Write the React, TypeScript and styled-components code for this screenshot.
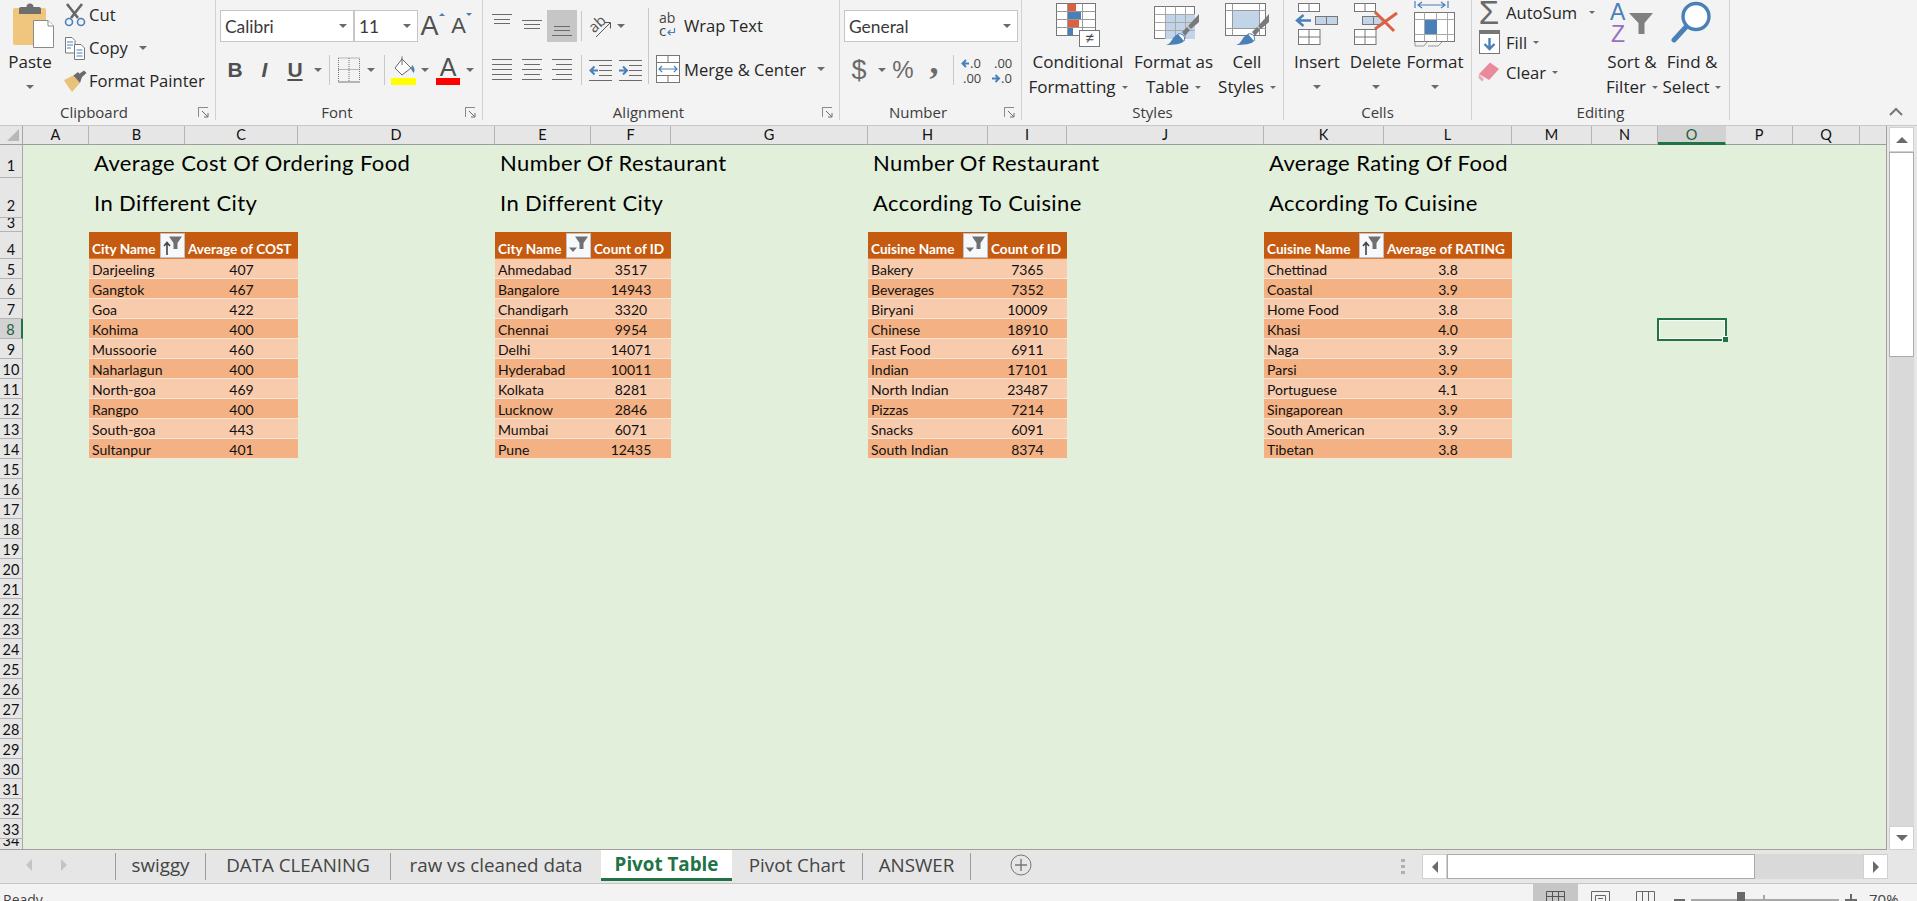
import React from "react";
import styled, { createGlobalStyle } from "styled-components";

const GlobalStyle = createGlobalStyle`
  html, body { margin: 0; padding: 0; overflow: hidden; background: #f3f3f3; }
  #root { width: 1917px; height: 901px; overflow: hidden; }
  * { box-sizing: border-box; }
`;

const UI = `"Open Sans", "Noto Sans", sans-serif`;
const CELL = `Lato, "Open Sans", sans-serif`;
const GREEN = "#217346";
const GRAY = "#6a6a6a";
const BLUE = "#4a80b8";
const RED = "#dc6141";

const Page = styled.div`
  width: 1917px;
  height: 901px;
  display: flex;
  flex-direction: column;
  overflow: hidden;
  font-family: ${UI};
  color: #262626;
`;

/* ribbon */
const Ribbon = styled.div`
  height: 126px;
  flex: none;
  display: flex;
  background: #f3f3f3;
  border-bottom: 1px solid #c8c8c8;
  overflow: hidden;
`;

const Group = styled.div<{ $w: number }>`
  width: ${(p) => p.$w}px;
  flex: none;
  height: 120px;
  display: flex;
  flex-direction: column;
  border-right: 1px solid #d2d2d2;
`;

const GroupBody = styled.div<{ $pl?: number }>`
  height: 104px;
  flex: none;
  display: flex;
  padding-left: ${(p) => p.$pl ?? 0}px;
`;

const LabelRow = styled.div`
  height: 17px;
  flex: none;
  display: flex;
  align-items: center;
`;

const GroupLabel = styled.div<{ $pr?: number }>`
  flex: 1;
  text-align: center;
  font-size: 15px;
  line-height: 17px;
  padding-right: ${(p) => p.$pr ?? 0}px;
  color: #3c3c3c;
`;

const Launcher = styled.svg`
  width: 11px;
  height: 11px;
  flex: none;
  margin-right: 6px;
`;

const CollapseArea = styled.div`
  flex: 1;
  display: flex;
  justify-content: flex-end;
  align-items: flex-start;
  padding: 107px 14px 0 0;
`;

const LargeBtn = styled.div<{ $w: number }>`
  width: ${(p) => p.$w}px;
  flex: none;
  display: flex;
  flex-direction: column;
  align-items: center;
  font-size: 17px;
  line-height: 24px;
  white-space: nowrap;
`;

const LargeIcon = styled.div<{ $shift?: number }>`
  height: 50px;
  flex: none;
  display: flex;
  align-items: flex-start;
  justify-content: center;
  margin-left: ${(p) => p.$shift ?? 0}px;
`;

const CaretLine = styled.div`
  height: 24px;
  margin-top: 1px;
  display: flex;
  align-items: center;
  gap: 6px;
`;

const Caret = styled.span<{ $small?: boolean }>`
  display: inline-block;
  flex: none;
  width: 0;
  height: 0;
  border-left: ${(p) => (p.$small ? 3 : 4)}px solid transparent;
  border-right: ${(p) => (p.$small ? 3 : 4)}px solid transparent;
  border-top: ${(p) => (p.$small ? 3 : 4)}px solid ${GRAY};
`;

const SmallStack = styled.div<{ $w?: number; $top: number; $h: number }>`
  width: ${(p) => (p.$w ? `${p.$w}px` : "auto")};
  flex: none;
  margin-top: ${(p) => p.$top}px;
  display: grid;
  grid-auto-rows: ${(p) => p.$h}px;
`;

const SmallRow = styled.div`
  display: flex;
  align-items: center;
  font-size: 16.6px;
  white-space: nowrap;
`;

const IconBox = styled.div<{ $w: number }>`
  width: ${(p) => p.$w}px;
  flex: none;
  display: flex;
  align-items: center;
  justify-content: center;
`;

const CaretGap = styled.span<{ $gap: number }>`
  margin-left: ${(p) => p.$gap}px;
  display: inline-flex;
`;

const ToolColumn = styled.div`
  flex: none;
  display: flex;
  flex-direction: column;
`;

const ToolRow = styled.div<{ $top: number }>`
  height: 32px;
  flex: none;
  margin-top: ${(p) => p.$top}px;
  display: flex;
  align-items: center;
`;

const Slot = styled.div<{ $w: number; $active?: boolean }>`
  width: ${(p) => p.$w}px;
  height: 32px;
  flex: none;
  display: flex;
  align-items: center;
  justify-content: center;
  background: ${(p) => (p.$active ? "#c6c6c6" : "transparent")};
  color: #505050;
`;

const VSep = styled.div`
  width: 1px;
  height: 30px;
  background: #c8c8c8;
`;

const TallSep = styled(VSep)`
  height: 76px;
  margin: 8px 3px 0 3px;
  flex: none;
`;

const Combo = styled.div<{ $w: number }>`
  width: ${(p) => p.$w}px;
  height: 32px;
  flex: none;
  background: #fff;
  border: 1px solid #c6c6c6;
  display: flex;
  align-items: center;
  justify-content: space-between;
  padding: 0 6px 0 4px;
  font-family: ${CELL};
  font-size: 17.4px;
  color: #3a3a3a;
`;

const BoldLetter = styled.span`
  font-family: "Liberation Sans", sans-serif;
  font-weight: 700;
  font-size: 21px;
  color: #505050;
`;

const ItalicLetter = styled(BoldLetter)`
  font-style: italic;
`;

const UnderLetter = styled(BoldLetter)`
  text-decoration: underline;
  text-underline-offset: 2px;
`;

const GrowLetter = styled.span<{ $size: number }>`
  font-family: "Liberation Sans", sans-serif;
  font-size: ${(p) => p.$size}px;
  color: #505050;
  line-height: 1;
`;

const TopTri = styled.span`
  align-self: flex-start;
  margin-top: 3px;
  display: inline-flex;
`;

const ColorLetter = styled.div`
  display: flex;
  flex-direction: column;
  align-items: center;
  font-family: "Liberation Sans", sans-serif;
  font-size: 25px;
  line-height: 22px;
  color: #505050;
`;

const ColorBar = styled.div<{ $c: string }>`
  width: 24px;
  height: 7px;
  background: ${(p) => p.$c};
`;

const NumSign = styled.span<{ $size: number }>`
  font-size: ${(p) => p.$size}px;
  font-family: "Liberation Sans", sans-serif;
  color: ${GRAY};
  line-height: 1;
`;

const CommaSign = styled(NumSign)`
  font-family: "Liberation Serif", serif;
  font-weight: 700;
  transform: translateY(-9px);
`;

/* sheet */
const Main = styled.div`
  height: 724px;
  flex: none;
  display: flex;
  background: #e6e6e6;
`;

const colWidths = [23, 66, 96, 113, 197, 96, 80, 197, 120, 79, 197, 120, 128, 80, 66, 68, 67, 67, 27];
const colNames = ["A", "B", "C", "D", "E", "F", "G", "H", "I", "J", "K", "L", "M", "N", "O", "P", "Q", ""];

const SheetGrid = styled.div`
  width: 1887px;
  flex: none;
  height: 724px;
  display: grid;
  grid-template-columns: ${colWidths.map((w) => `${w}px`).join(" ")};
  grid-template-rows: 19px 33px 40px 14px 27px repeat(29, 20px) 11px;
  background: #e2efda;
  border-bottom: 1px solid #a0a0a0;
  border-right: 1px solid #a0a0a0;
  overflow: hidden;
  font-family: ${CELL};
`;

const Corner = styled.div`
  background: #e6e6e6;
  border-right: 1px solid #a8a8a8;
  border-bottom: 1px solid #9c9c9c;
  display: flex;
  align-items: flex-end;
  justify-content: flex-end;
  padding: 0 3px 3px 0;
`;

const CornerMark = styled.div`
  width: 12px;
  height: 12px;
  background: #b8b8b8;
  clip-path: polygon(100% 0, 100% 100%, 0 100%);
`;

const ColHead = styled.div<{ $sel?: boolean }>`
  background: ${(p) => (p.$sel ? "#d2d2d2" : "#e6e6e6")};
  border-right: 1px solid ${(p) => (p.$sel ? "#d2d2d2" : "#b4b4b4")};
  border-bottom: ${(p) => (p.$sel ? `3px solid ${GREEN}` : "1px solid #9c9c9c")};
  text-align: center;
  font-size: 14.5px;
  line-height: 18px;
  color: ${(p) => (p.$sel ? "#1d5f3b" : "#111")};
`;

const ColFill = styled.div`
  background: #e6e6e6;
  border-bottom: 1px solid #9c9c9c;
`;

const RowHead = styled.div<{ $sel?: boolean; $tall?: boolean }>`
  grid-column: 1;
  background: ${(p) => (p.$sel ? "#d2d2d2" : "#e6e6e6")};
  border-right: ${(p) => (p.$sel ? `2px solid ${GREEN}` : "1px solid #a8a8a8")};
  border-bottom: 1px solid #b4b4b4;
  display: flex;
  align-items: flex-end;
  justify-content: center;
  padding-bottom: ${(p) => (p.$tall ? 3 : 0)}px;
  font-size: 14.5px;
  line-height: 17px;
  overflow: hidden;
  color: ${(p) => (p.$sel ? "#1d5f3b" : "#111")};
`;

const Title = styled.div<{ $col: number; $row: number; $pl: number }>`
  grid-column: ${(p) => p.$col};
  grid-row: ${(p) => p.$row};
  align-self: end;
  height: 30px;
  line-height: 30px;
  padding-left: ${(p) => p.$pl}px;
  white-space: nowrap;
  font-size: 22px;
  letter-spacing: 0.4px;
  color: #000;
`;

const PivotTable = styled.div<{ $col: number; $a: number; $b: number }>`
  grid-column: ${(p) => p.$col} / span 2;
  grid-row: 5 / span 11;
  display: grid;
  grid-template-columns: ${(p) => p.$a}px ${(p) => p.$b}px;
  grid-template-rows: 27px repeat(10, 20px);
  font-size: 14px;
`;

const HeadCell = styled.div`
  background: #c55a11;
  color: #fff;
  font-weight: 700;
  font-size: 13.6px;
  white-space: nowrap;
  display: flex;
  justify-content: space-between;
  align-items: flex-end;
  padding-left: 3px;
  line-height: 18px;
  border-bottom: 1px solid #ec7c30;
`;

const FilterBtn = styled.div`
  width: 25px;
  height: 25px;
  flex: none;
  background: #f7f8fa;
  border: 1px solid #bfc3c9;
  display: flex;
`;

const DataCell = styled.div<{ $odd: boolean; $center?: boolean }>`
  background: ${(p) => (p.$odd ? "#f4b183" : "#f8cbad")};
  border-bottom: 1px solid #fbe5d6;
  padding-left: ${(p) => (p.$center ? 0 : 3)}px;
  padding-top: 1px;
  text-align: ${(p) => (p.$center ? "center" : "left")};
  line-height: 19px;
  color: #111;
  white-space: nowrap;
`;

const Selection = styled.div`
  grid-column: 16;
  grid-row: 9;
  margin: -1px -1px -2px -1px;
  border: 2px solid ${GREEN};
  outline: 1px solid #fff;
  outline-offset: -3px;
  position: relative;
  z-index: 2;
`;

const FillHandle = styled.div`
  position: absolute;
  right: -3px;
  bottom: -3px;
  width: 6px;
  height: 6px;
  background: ${GREEN};
  border-left: 1px solid #fff;
  border-top: 1px solid #fff;
`;

const VScroll = styled.div`
  width: 30px;
  flex: none;
  display: flex;
  flex-direction: column;
  padding: 1px 3px 0 2px;
  background: #e6e6e6;
`;

const ScrollBtn = styled.div<{ $w?: number; $h?: number }>`
  width: ${(p) => (p.$w ? `${p.$w}px` : "100%")};
  height: ${(p) => (p.$h ? `${p.$h}px` : "100%")};
  flex: none;
  background: #fff;
  border: 1px solid #d0d0d0;
  display: flex;
  align-items: center;
  justify-content: center;
`;

const VThumb = styled.div`
  height: 205px;
  flex: none;
  background: #fff;
  border: 1px solid #ababab;
`;

const VTrack = styled.div`
  flex: 1;
  background: #d9d9d9;
`;

const Tri = styled.span<{ $dir: "up" | "down" | "left" | "right"; $c?: string; $s?: number }>`
  display: inline-block;
  width: 0;
  height: 0;
  ${(p) => {
    const s = p.$s ?? 6;
    const c = p.$c ?? GRAY;
    if (p.$dir === "up") return `border-left:${s}px solid transparent;border-right:${s}px solid transparent;border-bottom:${s}px solid ${c};`;
    if (p.$dir === "down") return `border-left:${s}px solid transparent;border-right:${s}px solid transparent;border-top:${s}px solid ${c};`;
    if (p.$dir === "left") return `border-top:${s}px solid transparent;border-bottom:${s}px solid transparent;border-right:${s}px solid ${c};`;
    return `border-top:${s}px solid transparent;border-bottom:${s}px solid transparent;border-left:${s}px solid ${c};`;
  }}
`;

/* tab strip */
const TabBar = styled.div`
  height: 34px;
  flex: none;
  display: flex;
  align-items: flex-start;
  background: #e6e6e6;
  border-bottom: 1px solid #c6c6c6;
`;

const TabNav = styled.div`
  width: 115px;
  height: 30px;
  flex: none;
  display: flex;
  align-items: center;
  padding-left: 26px;
  gap: 29px;
`;

const Tab = styled.div<{ $w: number; $active?: boolean; $sep?: boolean; $end?: boolean }>`
  width: ${(p) => p.$w}px;
  flex: none;
  height: ${(p) => (p.$active ? 31 : 27)}px;
  margin-top: ${(p) => (p.$active ? 0 : 3)}px;
  padding-bottom: ${(p) => (p.$active ? 0 : 3)}px;
  display: flex;
  align-items: ${(p) => (p.$active ? "flex-start" : "center")};
  justify-content: center;
  font-size: 18.8px;
  line-height: ${(p) => (p.$active ? 29 : 24)}px;
  white-space: nowrap;
  color: ${(p) => (p.$active ? GREEN : "#444")};
  font-weight: ${(p) => (p.$active ? 700 : 400)};
  background: ${(p) => (p.$active ? "#fff" : "transparent")};
  border-left: ${(p) => (p.$sep ? "1px solid #9c9c9c" : "none")};
  border-right: ${(p) => (p.$end ? "1px solid #9c9c9c" : "none")};
  border-bottom: ${(p) => (p.$active ? `3px solid ${GREEN}` : "none")};
`;

const PlusBtn = styled.svg`
  width: 22px;
  height: 22px;
  flex: none;
  margin: 4px 0 0 39px;
`;

const Dots = styled.div`
  margin: 9px 17px 0 auto;
  width: 4px;
  height: 15px;
  flex: none;
  display: flex;
  flex-direction: column;
  justify-content: space-between;
`;

const Dot = styled.span`
  width: 4px;
  height: 3px;
  background: #b0b0b0;
`;

const HScroll = styled.div`
  width: 466px;
  height: 25px;
  flex: none;
  margin: 4px 29px 0 0;
  display: flex;
  background: #d9d9d9;
`;

const HThumb = styled.div`
  width: 308px;
  flex: none;
  background: #fff;
  border: 1px solid #ababab;
`;

const HSpacer = styled.div`
  flex: 1;
`;

/* status bar */
const StatusBar = styled.div`
  height: 17px;
  flex: none;
  display: flex;
  background: #f3f3f3;
  overflow: hidden;
`;

const Ready = styled.div`
  padding: 6px 0 0 3px;
  font-size: 14px;
  line-height: 19px;
  color: #444;
  margin-right: auto;
`;

const ViewBtn = styled.div<{ $active?: boolean }>`
  width: 45px;
  flex: none;
  background: ${(p) => (p.$active ? "#c6c6c6" : "transparent")};
  display: flex;
  justify-content: center;
  padding-top: 7px;
`;

const ZoomArea = styled.div`
  width: 249px;
  flex: none;
  display: flex;
  align-items: flex-start;
  padding-left: 6px;
  font-size: 15px;
  color: #444;
`;

const ZoomMinus = styled.div`
  width: 11px;
  height: 2px;
  background: ${GRAY};
  margin: 15px 6px 0 0;
  flex: none;
`;

const ZoomTrack = styled.div`
  width: 148px;
  height: 2px;
  flex: none;
  margin-top: 15px;
  background: #a8a8a8;
  position: relative;
`;

const ZoomKnob = styled.div`
  position: absolute;
  left: 46px;
  top: -7px;
  width: 8px;
  height: 10px;
  background: ${GRAY};
`;

const ZoomTick = styled.div`
  position: absolute;
  left: 72px;
  top: -4px;
  width: 2px;
  height: 4px;
  background: #a8a8a8;
`;

const ZoomPlus = styled.svg`
  width: 12px;
  height: 12px;
  flex: none;
  margin: 10px 12px 0 6px;
`;

const ZoomValue = styled.div`
  line-height: 19px;
  padding-top: 6px;
`;

/* drawings */
const Stroke = ({ d, c = GRAY, w = 1 }: { d: string; c?: string; w?: number }) => (
  <path d={d} fill="none" stroke={c} strokeWidth={w} />
);

const DialogLauncher = () => (
  <Launcher viewBox="0 0 11 11">
    <Stroke d="M0.5 5V0.5H10" c="#8a8a8a" />
    <Stroke d="M0.5 0.5V10" c="#8a8a8a" />
    <Stroke d="M4 4L9.5 9.5M6 10H10V6" c="#6a6a6a" />
  </Launcher>
);

const PasteIcon = () => (
  <svg width="60" height="50" viewBox="0 0 60 50">
    <rect x="13" y="8" width="33" height="37" rx="2" fill="#f0c67f" />
    <path d="M19 14V9a2 2 0 0 1 2-2h5.5a3.5 3.5 0 0 1 7 0H39a2 2 0 0 1 2 2v5z" fill="#6e6e6e" />
    <path d="M33.5 20.5H48L53.5 26V47.5H33.5Z" fill="#fff" stroke="#8a8a8a" />
    <path d="M48 20.5V26H53.5" fill="#fff" stroke="#8a8a8a" />
  </svg>
);

const CutIcon = () => (
  <svg width="22" height="24" viewBox="0 0 22 24">
    <Stroke d="M3 1L14 15M18 1L7 15" w={2.6} c="#666" />
    <circle cx="5" cy="19" r="3.5" fill="none" stroke={BLUE} strokeWidth="1.6" />
    <circle cx="17" cy="19" r="3.5" fill="none" stroke={BLUE} strokeWidth="1.6" />
  </svg>
);

const CopyIcon = () => (
  <svg width="22" height="24" viewBox="0 0 22 24">
    <path d="M1.5 1.5H8L11 4.5V17H1.5Z" fill="#fff" stroke="#777" />
    <path d="M3 6H9M3 9H9M3 12H7" stroke={BLUE} />
    <path d="M10.5 8.5H17L20.5 12V23.5H10.5Z" fill="#fff" stroke="#777" />
    <path d="M12.5 14H18.5M12.5 17H18.5M12.5 20H18.5" stroke={BLUE} />
  </svg>
);

const BrushIcon = () => (
  <svg width="24" height="22" viewBox="0 0 24 22">
    <path d="M1 10L11 5L17 13L9 22C7 19 3 14 1 10Z" fill="#e8c27a" />
    <path d="M10.5 5.5L15 2L19 7L17 13Z" fill="#6a6a6a" />
    <path d="M16 4L21 0.5L23.5 3L18.5 7.5Z" fill="#6a6a6a" />
  </svg>
);

const BorderIcon = () => (
  <svg width="22" height="26" viewBox="0 0 22 26">
    <path d="M0.5 1H21.5V24M0.5 1V24M11 1V24M0.5 12.5H21.5" fill="none" stroke="#777" strokeDasharray="1 1" />
    <path d="M0 25H22" stroke="#777" />
  </svg>
);

const FillIcon = () => (
  <svg width="25" height="29" viewBox="0 0 25 29">
    <path d="M11 3L20 12L11 19L4 12Z" fill="#fff" stroke="#666" />
    <path d="M11 0.5V9" stroke="#666" />
    <path d="M21 9C24 12 24 15 22.5 17L20 13Z" fill={BLUE} />
    <rect x="0" y="22" width="25" height="7" fill="#ffff00" />
  </svg>
);

const HLines = ({ lines, w = 20, h = 32, c = GRAY }: { lines: [number, number, number][]; w?: number; h?: number; c?: string }) => (
  <svg width={w} height={h} viewBox={`0 0 ${w} ${h}`}>
    {lines.map(([a, b, y], i) => (
      <path key={i} d={`M${a} ${y + 0.5}H${b}`} stroke={c} />
    ))}
  </svg>
);

const OrientIcon = () => (
  <svg width="24" height="26" viewBox="0 0 24 26">
    <text x="1" y="16" fontSize="15" fontFamily="'Open Sans', sans-serif" fill="#555" transform="rotate(-42 9 13)">ab</text>
    <path d="M7 24L21 10M15.5 9.5H21.5V15.5" fill="none" stroke="#555" />
  </svg>
);

const IndentIcon = ({ dir }: { dir: "out" | "in" }) => (
  <svg width="23" height="32" viewBox="0 0 23 32">
    <path d="M0 6.5H23M10 11.5H23M10 16.5H23M10 21.5H23M0 26.5H23" stroke={GRAY} />
    {dir === "out" ? (
      <path d="M9 16.5H3M5.5 12.5L1.5 16.5L5.5 20.5" fill="none" stroke={BLUE} strokeWidth="2" />
    ) : (
      <path d="M0 16.5H7M4 12.5L8 16.5L4 20.5" fill="none" stroke={BLUE} strokeWidth="2" />
    )}
  </svg>
);

const WrapIcon = () => (
  <svg width="18" height="26" viewBox="0 0 18 26">
    <text x="0" y="11" fontSize="14" fontFamily="'Open Sans', sans-serif" fill="#444">ab</text>
    <text x="0" y="24" fontSize="15" fontFamily="'Open Sans', sans-serif" fill="#444">c</text>
    <path d="M15.5 16V20.5H9M11.5 18L9 20.5L11.5 23" fill="none" stroke={BLUE} strokeWidth="1.2" />
  </svg>
);

const MergeIcon = () => (
  <svg width="24" height="28" viewBox="0 0 24 28">
    <rect x="0.5" y="0.5" width="23" height="27" fill="#fff" stroke="#777" />
    <path d="M0.5 7.5H23.5M0.5 20.5H23.5M12 0.5V7.5M12 20.5V27.5" stroke="#777" />
    <path d="M3 14H21M6 11L3 14L6 17M18 11L21 14L18 17" fill="none" stroke={BLUE} strokeWidth="1.2" />
  </svg>
);

const DecimalIcon = ({ dir }: { dir: "inc" | "dec" }) => (
  <svg width="24" height="30" viewBox="0 0 24 30">
    {dir === "inc" ? (
      <>
        <path d="M8 8.5H2M5 5L1.5 8.5L5 12" fill="none" stroke={BLUE} strokeWidth="2" />
        <text x="9" y="13" fontSize="13" fontFamily="'Open Sans', sans-serif" fill="#444">.0</text>
        <text x="2" y="28" fontSize="13" fontFamily="'Open Sans', sans-serif" fill="#444">.00</text>
      </>
    ) : (
      <>
        <text x="3" y="13" fontSize="13" fontFamily="'Open Sans', sans-serif" fill="#444">.00</text>
        <path d="M1 23.5H7M4.5 20L8 23.5L4.5 27" fill="none" stroke={BLUE} strokeWidth="2" />
        <text x="10" y="28" fontSize="13" fontFamily="'Open Sans', sans-serif" fill="#444">.0</text>
      </>
    )}
  </svg>
);

const CondIcon = () => (
  <svg width="44" height="47" viewBox="0 0 44 47">
    <rect x="0.5" y="3.5" width="39" height="32" fill="#fff" stroke="#777" />
    <rect x="12" y="4" width="8" height="7" fill={RED} />
    <rect x="12" y="12" width="13" height="7" fill={BLUE} />
    <rect x="12" y="20" width="11" height="7" fill={RED} />
    <rect x="12" y="28" width="5" height="7" fill={BLUE} />
    <path d="M0.5 11.5H39.5M0.5 19.5H39.5M0.5 27.5H39.5M11.5 3.5V35.5M26.5 3.5V35.5" stroke="#999" fill="none" />
    <rect x="23.5" y="30.5" width="20" height="16" fill="#fff" stroke="#777" />
    <text x="33.5" y="43" textAnchor="middle" fontSize="15" fontFamily="'Liberation Sans', sans-serif" fill="#444">≠</text>
  </svg>
);

const BrushTip = ({ x, y }: { x: number; y: number }) => (
  <g transform={`translate(${x} ${y})`}>
    <path d="M0 18C6 17 6 9 12 7C16 6 20 9 18 14C16 17 8 18 0 18Z" fill={BLUE} />
    <path d="M12 7C16 6 20 9 18 14" fill="#fff" stroke={BLUE} />
    <path d="M16 5L21 0L24 3L19 9Z" fill="#7a7a7a" />
    <path d="M22 -1L33 -13L33 -5L25 2Z" fill="#7a7a7a" />
  </g>
);

const TableFormatIcon = () => (
  <svg width="46" height="46" viewBox="0 0 46 46">
    <rect x="0.5" y="6.5" width="40" height="32" fill="#fff" stroke="#777" />
    <rect x="11" y="14" width="30" height="25" fill="#c1d4e8" />
    <path d="M0.5 14.5H40.5M0.5 22.5H40.5M0.5 30.5H40.5M11.5 6.5V38.5M21.5 6.5V38.5M31.5 6.5V38.5" stroke="#a8a8a8" fill="none" />
    <BrushTip x={12} y={27} />
  </svg>
);

const CellStyleIcon = () => (
  <svg width="44" height="46" viewBox="0 0 44 46">
    <rect x="0.5" y="3.5" width="40" height="32" fill="#fff" stroke="#777" />
    <rect x="8" y="10" width="26" height="19" fill="#c1d4e8" />
    <path d="M0.5 10.5H40.5M0.5 28.5H40.5M7.5 3.5V35.5M34.5 3.5V35.5" stroke="#999" fill="none" />
    <BrushTip x={11} y={27} />
  </svg>
);

const GridBlock = ({ x, y }: { x: number; y: number }) => (
  <g transform={`translate(${x} ${y})`}>
    <rect x="0.5" y="0.5" width="21.5" height="15" fill="#fff" stroke="#777" />
    <path d="M0.5 8H22M11 0.5V15.5" stroke="#777" />
  </g>
);

const InsertIcon = () => (
  <svg width="44" height="46" viewBox="0 0 44 46">
    <rect x="3.5" y="3.5" width="21" height="8" fill="#fff" stroke="#777" />
    <path d="M14 3.5V11.5" stroke="#777" />
    <rect x="20.5" y="16.5" width="22" height="8" fill="#c1d4e8" stroke="#777" />
    <path d="M31.5 16.5V24.5" stroke="#777" />
    <path d="M16 20.5H3M8.5 15L2 20.5L8.5 26" fill="none" stroke={BLUE} strokeWidth="2.4" />
    <GridBlock x={3} y={29} />
  </svg>
);

const DeleteIcon = () => (
  <svg width="46" height="46" viewBox="0 0 46 46">
    <rect x="1.5" y="3.5" width="21" height="8" fill="#fff" stroke="#777" />
    <path d="M12 3.5V11.5" stroke="#777" />
    <rect x="9.5" y="16.5" width="18" height="8" fill="#c1d4e8" stroke="#777" />
    <path d="M20.5 16.5V24.5" stroke="#777" />
    <path d="M27 15L34 20.5L27 26Z" fill="#c1d4e8" />
    <path d="M22 12L41 31M44 13L22 29" fill="none" stroke={RED} strokeWidth="3" />
    <GridBlock x={1} y={29} />
  </svg>
);

const FormatIcon = () => (
  <svg width="42" height="47" viewBox="0 0 42 47">
    <path d="M1 1V8M34 1V8M4 5H31M8 2L4 5L8 8M27 2L31 5L27 8" fill="none" stroke={BLUE} strokeWidth="1.2" />
    <rect x="0.5" y="12.5" width="40" height="29" fill="#fff" stroke="#777" />
    <path d="M0.5 19.5H40.5M0.5 34.5H40.5M10.5 12.5V41.5M22.5 12.5V41.5M33.5 12.5V41.5" stroke="#a8a8a8" fill="none" />
    <rect x="11" y="20" width="12" height="14" fill={BLUE} />
    <path d="M1 42V46H10L13 42M14 46H24L28 42" fill="none" stroke="#999" />
  </svg>
);

const FillDownIcon = () => (
  <svg width="21" height="24" viewBox="0 0 21 24">
    <rect x="0.5" y="0.5" width="20" height="23" fill="#fff" stroke="#777" />
    <rect x="0" y="0" width="21" height="4" fill="#777" />
    <path d="M10.5 8V19M5.5 14L10.5 19L15.5 14" fill="none" stroke={BLUE} strokeWidth="2.4" />
  </svg>
);

const EraserIcon = () => (
  <svg width="22" height="20" viewBox="0 0 22 20">
    <path d="M1 12L12 0.5L21 7L11 18Z" fill="#e8899c" />
    <path d="M1 12L6 17.5L4 19.5L0.5 16Z" fill="#eda9b6" />
  </svg>
);

const SortIcon = () => (
  <svg width="44" height="44" viewBox="0 0 44 44">
    <text x="0" y="20" fontSize="23" fontFamily="'Liberation Sans', sans-serif" fill={BLUE}>A</text>
    <text x="1" y="42" fontSize="23" fontFamily="'Liberation Sans', sans-serif" fill="#9a6fc0">Z</text>
    <path d="M19 13H43L34.5 23V34H28.5V23Z" fill="#808080" />
  </svg>
);

const FindIcon = () => (
  <svg width="42" height="44" viewBox="0 0 42 44">
    <circle cx="25" cy="16.5" r="13" fill="#fff" stroke={BLUE} strokeWidth="3.4" />
    <path d="M15 27L3 40" stroke={BLUE} strokeWidth="5" strokeLinecap="round" />
  </svg>
);

const SortFilter = ({ sorted }: { sorted: boolean }) => (
  <svg width="23" height="23" viewBox="0 0 23 23">
    <path d="M8 2.5H21L16.5 9V15H12.5V9Z" fill="#707070" />
    {sorted ? (
      <path d="M6 21V9M3 12L6 8.5L9 12" fill="none" stroke="#444" strokeWidth="1.6" />
    ) : (
      <path d="M2 13.5H10L6 18Z" fill="#707070" />
    )}
  </svg>
);

type TableData = {
  col: number;
  a: number;
  b: number;
  head: [string, string];
  sorted: boolean;
  rows: [string, string][];
};

const tables: TableData[] = [
  {
    col: 3, a: 96, b: 113, head: ["City Name", "Average of COST"], sorted: true,
    rows: [["Darjeeling", "407"], ["Gangtok", "467"], ["Goa", "422"], ["Kohima", "400"], ["Mussoorie", "460"], ["Naharlagun", "400"], ["North-goa", "469"], ["Rangpo", "400"], ["South-goa", "443"], ["Sultanpur", "401"]],
  },
  {
    col: 6, a: 96, b: 80, head: ["City Name", "Count of ID"], sorted: false,
    rows: [["Ahmedabad", "3517"], ["Bangalore", "14943"], ["Chandigarh", "3320"], ["Chennai", "9954"], ["Delhi", "14071"], ["Hyderabad", "10011"], ["Kolkata", "8281"], ["Lucknow", "2846"], ["Mumbai", "6071"], ["Pune", "12435"]],
  },
  {
    col: 9, a: 120, b: 79, head: ["Cuisine Name", "Count of ID"], sorted: false,
    rows: [["Bakery", "7365"], ["Beverages", "7352"], ["Biryani", "10009"], ["Chinese", "18910"], ["Fast Food", "6911"], ["Indian", "17101"], ["North Indian", "23487"], ["Pizzas", "7214"], ["Snacks", "6091"], ["South Indian", "8374"]],
  },
  {
    col: 12, a: 120, b: 128, head: ["Cuisine Name", "Average of RATING"], sorted: true,
    rows: [["Chettinad", "3.8"], ["Coastal", "3.9"], ["Home Food", "3.8"], ["Khasi", "4.0"], ["Naga", "3.9"], ["Parsi", "3.9"], ["Portuguese", "4.1"], ["Singaporean", "3.9"], ["South American", "3.9"], ["Tibetan", "3.8"]],
  },
];

const titles: { col: number; pl: number; top: string; bottom: string }[] = [
  { col: 3, pl: 5, top: "Average Cost Of Ordering Food", bottom: "In Different City" },
  { col: 6, pl: 5, top: "Number Of Restaurant", bottom: "In Different City" },
  { col: 9, pl: 5, top: "Number Of Restaurant", bottom: "According To Cuisine" },
  { col: 12, pl: 5, top: "Average Rating Of Food", bottom: "According To Cuisine" },
];

const rowNumbers = Array.from({ length: 34 }, (_, i) => i + 1);

const Pivot = ({ t }: { t: TableData }) => (
  <PivotTable $col={t.col} $a={t.a} $b={t.b}>
    <HeadCell>
      {t.head[0]}
      <FilterBtn>
        <SortFilter sorted={t.sorted} />
      </FilterBtn>
    </HeadCell>
    <HeadCell>{t.head[1]}</HeadCell>
    {t.rows.map(([name, value], i) => (
      <React.Fragment key={name}>
        <DataCell $odd={i % 2 === 1}>{name}</DataCell>
        <DataCell $odd={i % 2 === 1} $center>
          {value}
        </DataCell>
      </React.Fragment>
    ))}
  </PivotTable>
);

const Sheet = () => (
  <SheetGrid>
    <Corner>
      <CornerMark />
    </Corner>
    {colNames.map((name) =>
      name ? (
        <ColHead key={name} $sel={name === "O"}>
          {name}
        </ColHead>
      ) : (
        <ColFill key="fill" />
      ),
    )}
    {rowNumbers.map((n) => (
      <RowHead key={n} $sel={n === 8} $tall={n <= 2} style={{ gridRow: n + 1 }}>
        {n}
      </RowHead>
    ))}
    {titles.map((t) => (
      <React.Fragment key={t.col}>
        <Title $col={t.col} $row={2} $pl={t.pl}>
          {t.top}
        </Title>
        <Title $col={t.col} $row={3} $pl={t.pl}>
          {t.bottom}
        </Title>
      </React.Fragment>
    ))}
    {tables.map((t) => (
      <Pivot key={t.col} t={t} />
    ))}
    <Selection>
      <FillHandle />
    </Selection>
  </SheetGrid>
);

const RibbonBar = () => (
  <Ribbon>
    <Group $w={216}>
      <GroupBody>
        <LargeBtn $w={60}>
          <LargeIcon>
            <PasteIcon />
          </LargeIcon>
          Paste
          <CaretLine>
            <Caret />
          </CaretLine>
        </LargeBtn>
        <SmallStack $top={-2} $h={33}>
          <SmallRow>
            <IconBox $w={29}>
              <CutIcon />
            </IconBox>
            Cut
          </SmallRow>
          <SmallRow>
            <IconBox $w={29}>
              <CopyIcon />
            </IconBox>
            Copy
            <CaretGap $gap={11}>
              <Caret />
            </CaretGap>
          </SmallRow>
          <SmallRow>
            <IconBox $w={29}>
              <BrushIcon />
            </IconBox>
            Format Painter
          </SmallRow>
        </SmallStack>
      </GroupBody>
      <LabelRow>
        <GroupLabel $pr={10}>Clipboard</GroupLabel>
        <DialogLauncher />
      </LabelRow>
    </Group>

    <Group $w={267}>
      <GroupBody $pl={4}>
        <ToolColumn>
          <ToolRow $top={10}>
            <Combo $w={134}>
              Calibri
              <Caret />
            </Combo>
            <Combo $w={64}>
              11
              <Caret />
            </Combo>
            <Slot $w={29}>
              <GrowLetter $size={27}>A</GrowLetter>
              <TopTri>
                <Tri $dir="up" $c={BLUE} $s={3} />
              </TopTri>
            </Slot>
            <Slot $w={29}>
              <GrowLetter $size={22}>A</GrowLetter>
              <TopTri>
                <Tri $dir="down" $c={BLUE} $s={3} />
              </TopTri>
            </Slot>
          </ToolRow>
          <ToolRow $top={12}>
            <Slot $w={30}>
              <BoldLetter>B</BoldLetter>
            </Slot>
            <Slot $w={29}>
              <ItalicLetter>I</ItalicLetter>
            </Slot>
            <Slot $w={32}>
              <UnderLetter>U</UnderLetter>
            </Slot>
            <Slot $w={13}>
              <Caret />
            </Slot>
            <Slot $w={10}>
              <VSep />
            </Slot>
            <Slot $w={29}>
              <BorderIcon />
            </Slot>
            <Slot $w={16}>
              <Caret />
            </Slot>
            <Slot $w={10}>
              <VSep />
            </Slot>
            <Slot $w={28}>
              <FillIcon />
            </Slot>
            <Slot $w={16}>
              <Caret />
            </Slot>
            <Slot $w={30}>
              <ColorLetter>
                A
                <ColorBar $c="#ff0000" />
              </ColorLetter>
            </Slot>
            <Slot $w={14}>
              <Caret />
            </Slot>
          </ToolRow>
        </ToolColumn>
      </GroupBody>
      <LabelRow>
        <GroupLabel $pr={7}>Font</GroupLabel>
        <DialogLauncher />
      </LabelRow>
    </Group>

    <Group $w={357}>
      <GroupBody $pl={4}>
        <ToolColumn>
          <ToolRow $top={10}>
            <Slot $w={30}>
              <HLines lines={[[0, 20, 4], [2, 18, 9], [2, 18, 13]]} />
            </Slot>
            <Slot $w={30}>
              <HLines lines={[[0, 20, 10], [2, 18, 14], [2, 18, 18]]} />
            </Slot>
            <Slot $w={30} $active>
              <HLines lines={[[2, 18, 16], [2, 18, 20], [0, 20, 25]]} />
            </Slot>
            <Slot $w={8}>
              <VSep />
            </Slot>
            <Slot $w={32}>
              <OrientIcon />
            </Slot>
            <Slot $w={8}>
              <Caret />
            </Slot>
          </ToolRow>
          <ToolRow $top={12}>
            <Slot $w={30}>
              <HLines lines={[[0, 20, 5], [0, 20, 10], [0, 20, 15], [0, 20, 20], [0, 20, 25]]} />
            </Slot>
            <Slot $w={30}>
              <HLines lines={[[0, 20, 5], [2, 18, 10], [0, 20, 15], [2, 18, 20], [0, 20, 25]]} />
            </Slot>
            <Slot $w={30}>
              <HLines lines={[[0, 20, 5], [4, 20, 10], [0, 20, 15], [4, 20, 20], [0, 20, 25]]} />
            </Slot>
            <Slot $w={8}>
              <VSep />
            </Slot>
            <Slot $w={30}>
              <IndentIcon dir="out" />
            </Slot>
            <Slot $w={30}>
              <IndentIcon dir="in" />
            </Slot>
          </ToolRow>
        </ToolColumn>
        <TallSep />
        <SmallStack $top={3} $h={44}>
          <SmallRow>
            <IconBox $w={32}>
              <WrapIcon />
            </IconBox>
            Wrap Text
          </SmallRow>
          <SmallRow>
            <IconBox $w={32}>
              <MergeIcon />
            </IconBox>
            Merge &amp; Center
            <CaretGap $gap={11}>
              <Caret />
            </CaretGap>
          </SmallRow>
        </SmallStack>
      </GroupBody>
      <LabelRow>
        <GroupLabel $pr={8}>Alignment</GroupLabel>
        <DialogLauncher />
      </LabelRow>
    </Group>

    <Group $w={182}>
      <GroupBody $pl={4}>
        <ToolColumn>
          <ToolRow $top={10}>
            <Combo $w={174}>
              General
              <Caret />
            </Combo>
          </ToolRow>
          <ToolRow $top={12}>
            <Slot $w={30}>
              <NumSign $size={27}>$</NumSign>
            </Slot>
            <Slot $w={16}>
              <Caret />
            </Slot>
            <Slot $w={26}>
              <NumSign $size={24}>%</NumSign>
            </Slot>
            <Slot $w={36}>
              <CommaSign $size={36}>,</CommaSign>
            </Slot>
            <Slot $w={2}>
              <VSep />
            </Slot>
            <Slot $w={37}>
              <DecimalIcon dir="inc" />
            </Slot>
            <Slot $w={24}>
              <DecimalIcon dir="dec" />
            </Slot>
          </ToolRow>
        </ToolColumn>
      </GroupBody>
      <LabelRow>
        <GroupLabel $pr={8}>Number</GroupLabel>
        <DialogLauncher />
      </LabelRow>
    </Group>

    <Group $w={262}>
      <GroupBody>
        <LargeBtn $w={112}>
          <LargeIcon>
            <CondIcon />
          </LargeIcon>
          Conditional
          <CaretLine>
            Formatting
            <Caret $small />
          </CaretLine>
        </LargeBtn>
        <LargeBtn $w={79}>
          <LargeIcon $shift={6}>
            <TableFormatIcon />
          </LargeIcon>
          Format as
          <CaretLine>
            Table
            <Caret $small />
          </CaretLine>
        </LargeBtn>
        <LargeBtn $w={68}>
          <LargeIcon>
            <CellStyleIcon />
          </LargeIcon>
          Cell
          <CaretLine>
            Styles
            <Caret $small />
          </CaretLine>
        </LargeBtn>
      </GroupBody>
      <LabelRow>
        <GroupLabel>Styles</GroupLabel>
      </LabelRow>
    </Group>

    <Group $w={188}>
      <GroupBody>
        <LargeBtn $w={66}>
          <LargeIcon>
            <InsertIcon />
          </LargeIcon>
          Insert
          <CaretLine>
            <Caret />
          </CaretLine>
        </LargeBtn>
        <LargeBtn $w={51}>
          <LargeIcon>
            <DeleteIcon />
          </LargeIcon>
          Delete
          <CaretLine>
            <Caret />
          </CaretLine>
        </LargeBtn>
        <LargeBtn $w={68}>
          <LargeIcon>
            <FormatIcon />
          </LargeIcon>
          Format
          <CaretLine>
            <Caret />
          </CaretLine>
        </LargeBtn>
      </GroupBody>
      <LabelRow>
        <GroupLabel>Cells</GroupLabel>
      </LabelRow>
    </Group>

    <Group $w={258}>
      <GroupBody>
        <SmallStack $w={130} $top={-3} $h={30}>
          <SmallRow>
            <IconBox $w={34}>
              <NumSign $size={33}>Σ</NumSign>
            </IconBox>
            AutoSum
            <CaretGap $gap={12}>
              <Caret $small />
            </CaretGap>
          </SmallRow>
          <SmallRow>
            <IconBox $w={34}>
              <FillDownIcon />
            </IconBox>
            Fill
            <CaretGap $gap={6}>
              <Caret $small />
            </CaretGap>
          </SmallRow>
          <SmallRow>
            <IconBox $w={34}>
              <EraserIcon />
            </IconBox>
            Clear
            <CaretGap $gap={6}>
              <Caret $small />
            </CaretGap>
          </SmallRow>
        </SmallStack>
        <LargeBtn $w={60}>
          <LargeIcon>
            <SortIcon />
          </LargeIcon>
          Sort &amp;
          <CaretLine>
            Filter
            <Caret $small />
          </CaretLine>
        </LargeBtn>
        <LargeBtn $w={60}>
          <LargeIcon>
            <FindIcon />
          </LargeIcon>
          Find &amp;
          <CaretLine>
            Select
            <Caret $small />
          </CaretLine>
        </LargeBtn>
      </GroupBody>
      <LabelRow>
        <GroupLabel>Editing</GroupLabel>
      </LabelRow>
    </Group>

    <CollapseArea>
      <svg width="14" height="9" viewBox="0 0 14 9">
        <path d="M1 8L7 2L13 8" fill="none" stroke="#777" strokeWidth="2" />
      </svg>
    </CollapseArea>
  </Ribbon>
);

const TabStrip = () => (
  <TabBar>
    <TabNav>
      <Tri $dir="left" $c="#c4c4c4" />
      <Tri $dir="right" $c="#c4c4c4" />
    </TabNav>
    <Tab $w={90} $sep>swiggy</Tab>
    <Tab $w={185} $sep>DATA CLEANING</Tab>
    <Tab $w={211} $sep>raw vs cleaned data</Tab>
    <Tab $w={131} $active>Pivot Table</Tab>
    <Tab $w={130}>Pivot Chart</Tab>
    <Tab $w={109} $sep $end>ANSWER</Tab>
    <PlusBtn viewBox="0 0 22 22">
      <circle cx="11" cy="11" r="10" fill="none" stroke="#777" />
      <path d="M11 5V17M5 11H17" stroke="#777" strokeWidth="1.4" />
    </PlusBtn>
    <Dots>
      <Dot />
      <Dot />
      <Dot />
    </Dots>
    <HScroll>
      <ScrollBtn $w={25}>
        <Tri $dir="left" />
      </ScrollBtn>
      <HThumb />
      <HSpacer />
      <ScrollBtn $w={25}>
        <Tri $dir="right" />
      </ScrollBtn>
    </HScroll>
  </TabBar>
);

const StatusStrip = () => (
  <StatusBar>
    <Ready>Ready</Ready>
    <ViewBtn $active>
      <svg width="19" height="14" viewBox="0 0 19 14">
        <path d="M0.5 14V0.5H18.5V14M0.5 5.5H18.5M6.5 0.5V14M12.5 0.5V14" fill="none" stroke="#555" />
      </svg>
    </ViewBtn>
    <ViewBtn>
      <svg width="19" height="14" viewBox="0 0 19 14">
        <path d="M0.5 14V0.5H18.5V14M4.5 14V4.5H14.5V14M7 7.5H12M7 10.5H12" fill="none" stroke="#666" />
      </svg>
    </ViewBtn>
    <ViewBtn>
      <svg width="19" height="14" viewBox="0 0 19 14">
        <path d="M0.5 14V0.5H18.5V14M6.5 0.5V14M12.5 0.5V14" fill="none" stroke="#666" />
      </svg>
    </ViewBtn>
    <ZoomArea>
      <ZoomMinus />
      <ZoomTrack>
        <ZoomKnob />
        <ZoomTick />
      </ZoomTrack>
      <ZoomPlus viewBox="0 0 12 12">
        <path d="M6 0V12M0 6H12" stroke="#6a6a6a" strokeWidth="2" />
      </ZoomPlus>
      <ZoomValue>70%</ZoomValue>
    </ZoomArea>
  </StatusBar>
);

export default function App() {
  return (
    <Page>
      <GlobalStyle />
      <RibbonBar />
      <Main>
        <Sheet />
        <VScroll>
          <ScrollBtn $h={25}>
            <Tri $dir="up" />
          </ScrollBtn>
          <VThumb />
          <VTrack />
          <ScrollBtn $h={24}>
            <Tri $dir="down" />
          </ScrollBtn>
        </VScroll>
      </Main>
      <TabStrip />
      <StatusStrip />
    </Page>
  );
}
